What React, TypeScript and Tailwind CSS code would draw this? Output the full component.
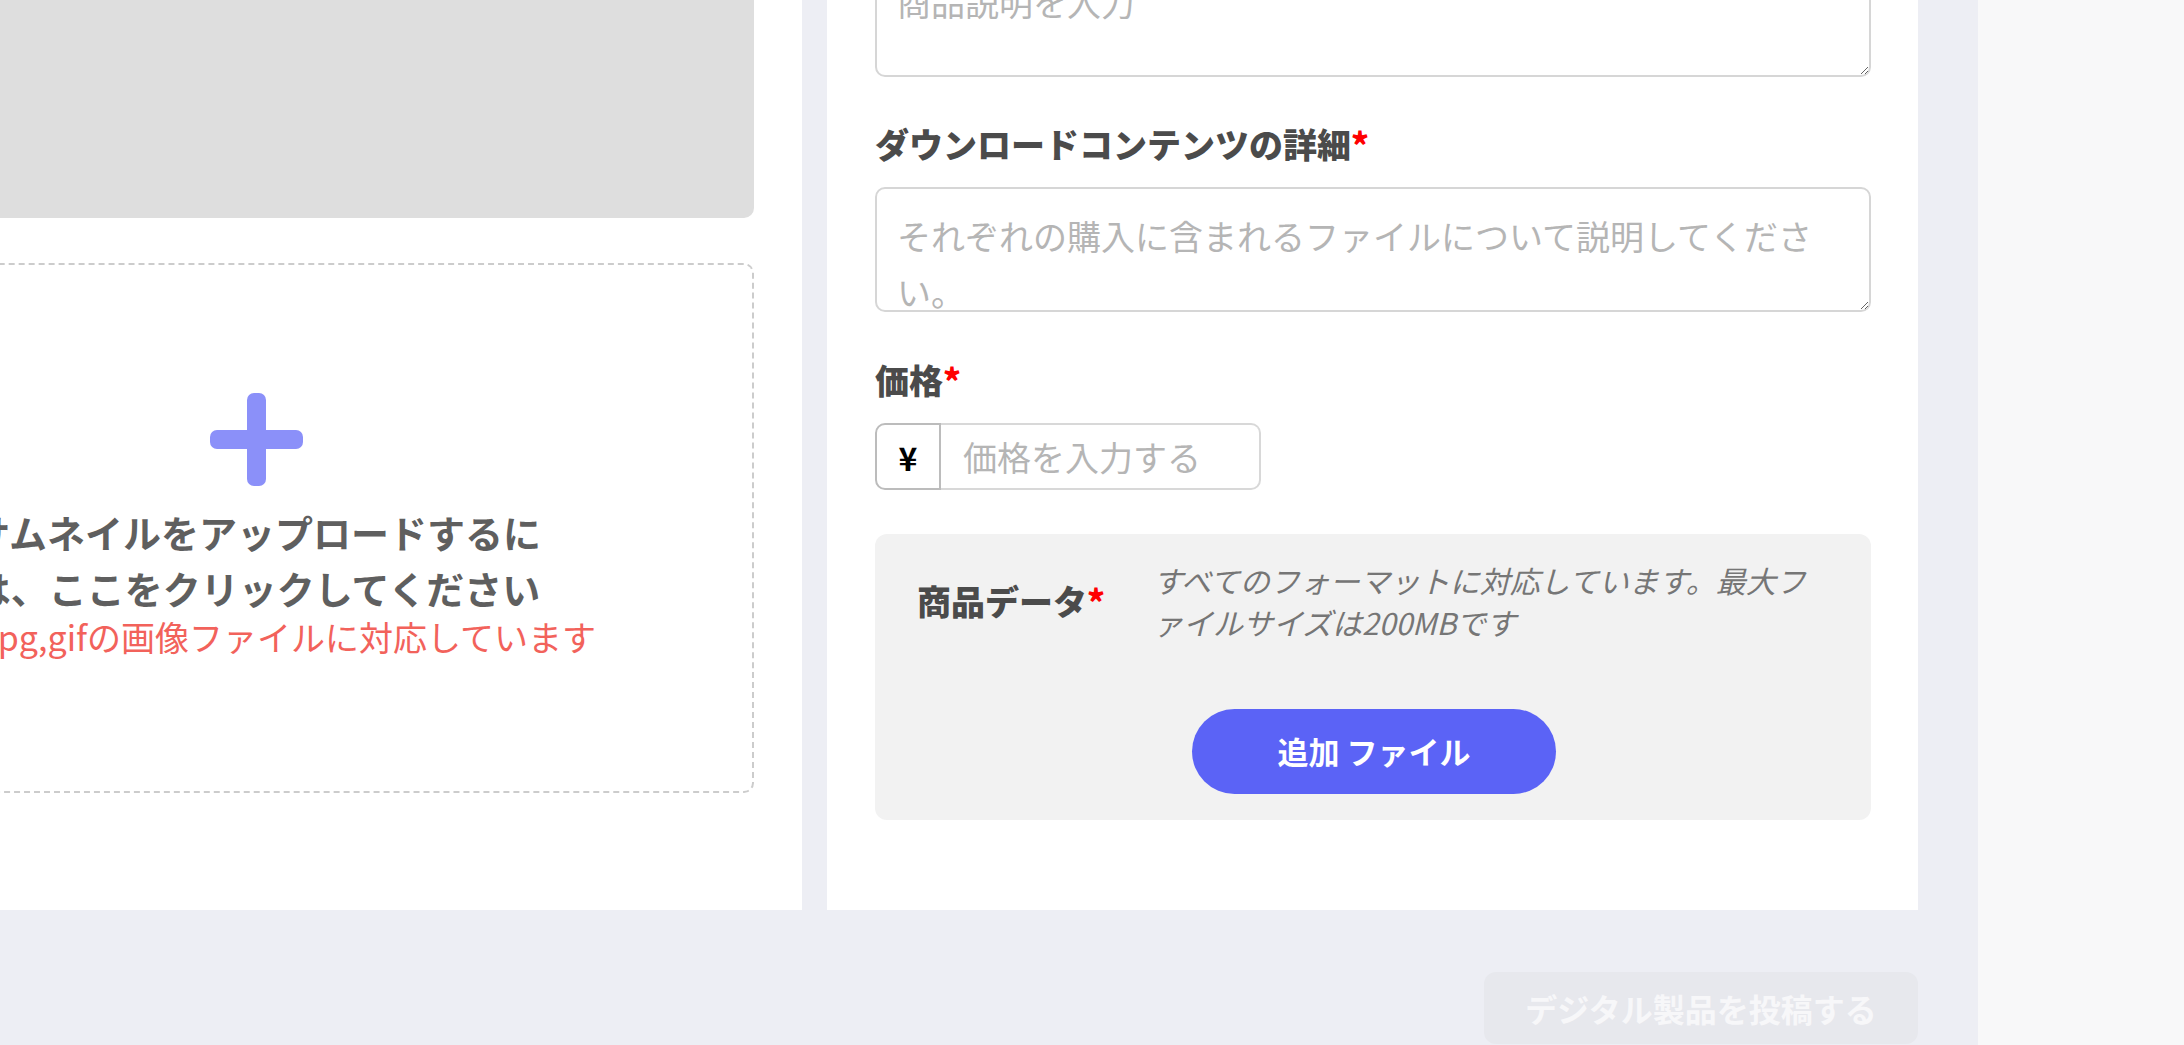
const Required = () => <span className="text-[#ff0000]">*</span>;

const PlusIcon = () => (
  <svg width="93" height="93" viewBox="0 0 93 93">
    <rect x="37" y="0" width="19" height="93" rx="7" fill="#8b90f9" />
    <rect x="0" y="37" width="93" height="19" rx="7" fill="#8b90f9" />
  </svg>
);

const App = () => {
  return (
    <div className="flex h-[1045px] w-full overflow-hidden bg-[#edeef4] font-['Noto_Sans_CJK_JP','Noto_Sans',sans-serif]">
      <div className="min-w-0 flex-1">
        <div className="-mt-[47px] -ml-[289px] w-[2207px]">
          <div className="flex gap-[25px]">
            {/* thumbnail column */}
            <div className="w-[1091px] shrink-0 bg-white px-[48px]">
              <div className="h-[265px] rounded-b-[10px] bg-[#dedede]" />
              <div className="mt-[45px] flex h-[530px] cursor-pointer flex-col items-center justify-center rounded-[10px] border-2 border-dashed border-[#cccccc] pb-[6px]">
                <PlusIcon />
                <p className="mt-[18px] max-w-[590px] text-center text-[38px] font-bold leading-[56px] text-[#5f5f5f]">
                  サムネイルをアップロードするには、ここをクリックしてください
                </p>
                <p className="whitespace-nowrap text-[34px] leading-[42px] text-[#f2625b]">
                  png,jpg,gifの画像ファイルに対応しています
                </p>
              </div>
            </div>

            {/* form column */}
            <div className="w-[1091px] shrink-0 bg-white pb-[90px] pl-[48px] pr-[47px]">
              <textarea
                className="block h-[124px] w-full overflow-hidden rounded-[10px] border-2 border-[#d6d6d6] px-[20px] pt-[19px] text-[34px] leading-[56px] text-[#333] outline-none placeholder:text-[#b5b5b5]"
                placeholder="商品説明を入力"
              />

              <p className="mt-[43px] text-[34px] font-black leading-[48px] text-[#4b4b4b]">
                ダウンロードコンテンツの詳細
                <Required />
              </p>
              <textarea
                className="mt-[19px] block h-[125px] w-full overflow-hidden rounded-[10px] border-2 border-[#d6d6d6] px-[20px] pt-[19px] text-[34px] leading-[56px] text-[#333] outline-none placeholder:text-[#b5b5b5]"
                placeholder="それぞれの購入に含まれるファイルについて説明してください。"
              />

              <p className="mt-[44px] text-[34px] font-black leading-[48px] text-[#4b4b4b]">
                価格
                <Required />
              </p>
              <div className="mt-[19px] flex h-[67px] w-[386px]">
                <span className="flex w-[66px] shrink-0 items-center justify-center rounded-l-[10px] border-2 border-[#bcbcbc] text-[32px] font-bold text-black">
                  ¥
                </span>
                <input
                  className="min-w-0 flex-1 rounded-r-[10px] border-2 border-l-0 border-[#d8d8d8] pl-[22px] text-[34px] text-[#333] outline-none placeholder:text-[#b5b5b5]"
                  placeholder="価格を入力する"
                />
              </div>

              <div className="mt-[44px] rounded-[12px] bg-[#f2f2f2] pb-[26px] pl-[42px] pr-[40px] pt-[25px]">
                <div className="flex items-center">
                  <p className="w-[236px] shrink-0 text-[34px] font-black leading-[48px] text-[#4b4b4b]">
                    商品データ
                    <Required />
                  </p>
                  <p className="text-[30px] italic leading-[42px] text-[#767676]">
                    すべてのフォーマットに対応しています。最大ファイルサイズは200MBです
                  </p>
                </div>
                <div className="mt-[66px] flex justify-center">
                  <button className="h-[85px] w-[364px] rounded-full bg-[#5b63f6] text-[31px] font-bold text-white">
                    追加 ファイル
                  </button>
                </div>
              </div>
            </div>
          </div>

          <div className="mt-[62px] flex justify-end">
            <button className="h-[72px] w-[434px] rounded-[12px] bg-[#e7e8ed] text-[32px] font-bold text-[#f7f7f9]">
              デジタル製品を投稿する
            </button>
          </div>
        </div>
      </div>
      <div className="w-[206px] shrink-0 bg-[#f8f8f9]" />
    </div>
  );
};

export default App;
